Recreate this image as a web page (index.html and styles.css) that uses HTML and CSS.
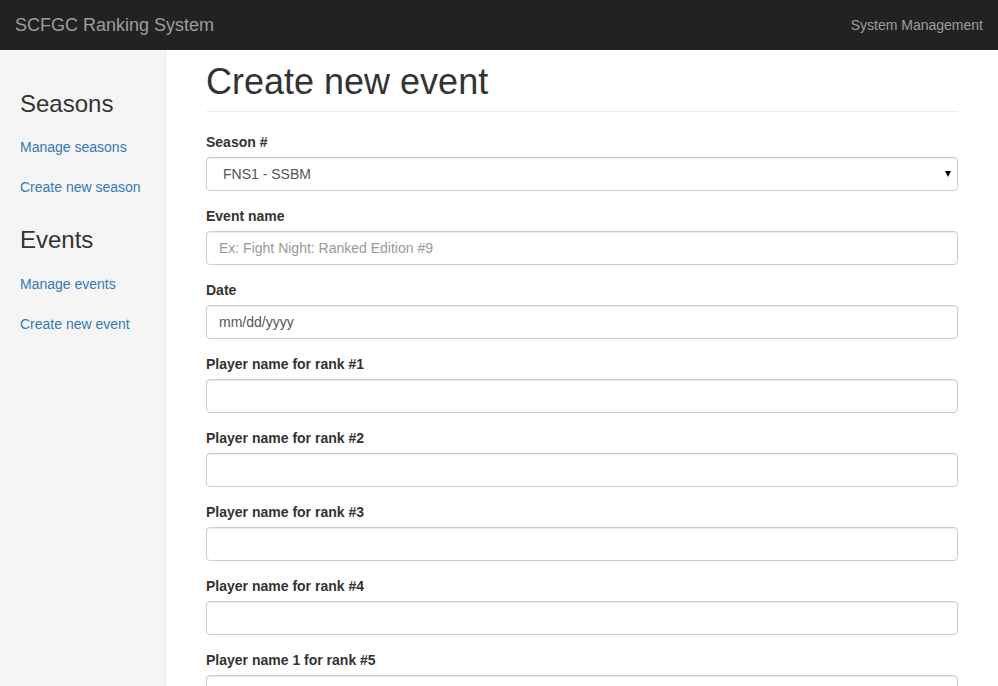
FILE: index.html
```html
<!DOCTYPE html>
<html>
<head>
<meta charset="utf-8">
<title>Create new event</title>
<link rel="stylesheet" href="styles.css">
</head>
<body>
<nav class="navbar">
  <a class="brand" href="#">SCFGC Ranking System</a>
  <a class="nav-right" href="#">System Management</a>
</nav>
<div class="layout">
  <aside class="sidebar">
    <h3>Seasons</h3>
    <ul class="nav-sidebar">
      <li><a href="#">Manage seasons</a></li>
      <li><a href="#">Create new season</a></li>
    </ul>
    <h3>Events</h3>
    <ul class="nav-sidebar">
      <li><a href="#">Manage events</a></li>
      <li><a href="#">Create new event</a></li>
    </ul>
  </aside>
  <main class="main">
    <h1 class="page-header">Create new event</h1>
    <form class="form">
      <div class="form-group">
        <label>Season #</label>
        <div class="select-wrap">
          <select class="form-control select"><option>FNS1 - SSBM</option></select>
        </div>
      </div>
      <div class="form-group">
        <label>Event name</label>
        <input class="form-control" type="text" placeholder="Ex: Fight Night: Ranked Edition #9">
      </div>
      <div class="form-group">
        <label>Date</label>
        <input class="form-control" type="text" value="mm/dd/yyyy">
      </div>
      <div class="form-group">
        <label>Player name for rank #1</label>
        <input class="form-control" type="text">
      </div>
      <div class="form-group">
        <label>Player name for rank #2</label>
        <input class="form-control" type="text">
      </div>
      <div class="form-group">
        <label>Player name for rank #3</label>
        <input class="form-control" type="text">
      </div>
      <div class="form-group">
        <label>Player name for rank #4</label>
        <input class="form-control" type="text">
      </div>
      <div class="form-group">
        <label>Player name 1 for rank #5</label>
        <input class="form-control" type="text">
      </div>
    </form>
  </main>
</div>
</body>
</html>
```
FILE: styles.css
```css
html, body {
  margin: 0;
  padding: 0;
}
body {
  font-family: "Liberation Sans", Arial, Helvetica, sans-serif;
  font-size: 14px;
  line-height: 20px;
  color: #333;
  background: #fff;
}
a {
  text-decoration: none;
}
.navbar {
  height: 50px;
  background: #222;
  display: flex;
  justify-content: space-between;
  align-items: center;
}
.brand {
  padding: 15px;
  font-size: 18px;
  line-height: 20px;
  color: #9d9d9d;
}
.nav-right {
  padding: 15px;
  font-size: 14px;
  line-height: 20px;
  color: #9d9d9d;
}
.layout {
  display: flex;
  align-items: stretch;
  min-height: calc(100vh - 50px);
}
.sidebar {
  width: 145px;
  flex: none;
  padding: 21px 0 20px 20px;
  background: #f5f5f5;
  border-right: 1px solid #eee;
}
.sidebar h3 {
  font-size: 24px;
  font-weight: 500;
  line-height: 1.1;
  margin: 20px 0 10px;
  color: #333;
}
.nav-sidebar {
  list-style: none;
  margin: 0 0 20px;
  padding: 0;
}
.nav-sidebar a {
  display: block;
  padding: 10px 0;
  color: #337ab7;
  line-height: 20px;
}
.main {
  flex: 1;
  min-width: 0;
  padding: 12px 40px 0;
}
.page-header {
  font-size: 36px;
  font-weight: 500;
  line-height: 1.1;
  margin: 0 0 20px;
  padding-bottom: 9px;
  border-bottom: 1px solid #eee;
  color: #333;
}
.form {
  margin: 0;
}
.form-group {
  margin-bottom: 15px;
}
.form-group label {
  display: block;
  font-weight: bold;
  margin-bottom: 5px;
}
.form-control {
  display: block;
  box-sizing: border-box;
  width: 100%;
  height: 34px;
  padding: 6px 12px;
  font-family: inherit;
  font-size: 14px;
  line-height: 20px;
  color: #555;
  background: #fff;
  border: 1px solid #ccc;
  border-radius: 4px;
  box-shadow: inset 0 1px 1px rgba(0, 0, 0, .075);
  margin: 0;
  outline: none;
}
.form-control::placeholder {
  color: #999;
}
.select-wrap {
  position: relative;
}
.select {
  appearance: none;
  -webkit-appearance: none;
  padding-left: 16px;
}
.select-wrap::after {
  content: "";
  position: absolute;
  right: 7px;
  top: 14px;
  border-left: 3px solid transparent;
  border-right: 3px solid transparent;
  border-top: 6px solid #000;
  pointer-events: none;
}
```
